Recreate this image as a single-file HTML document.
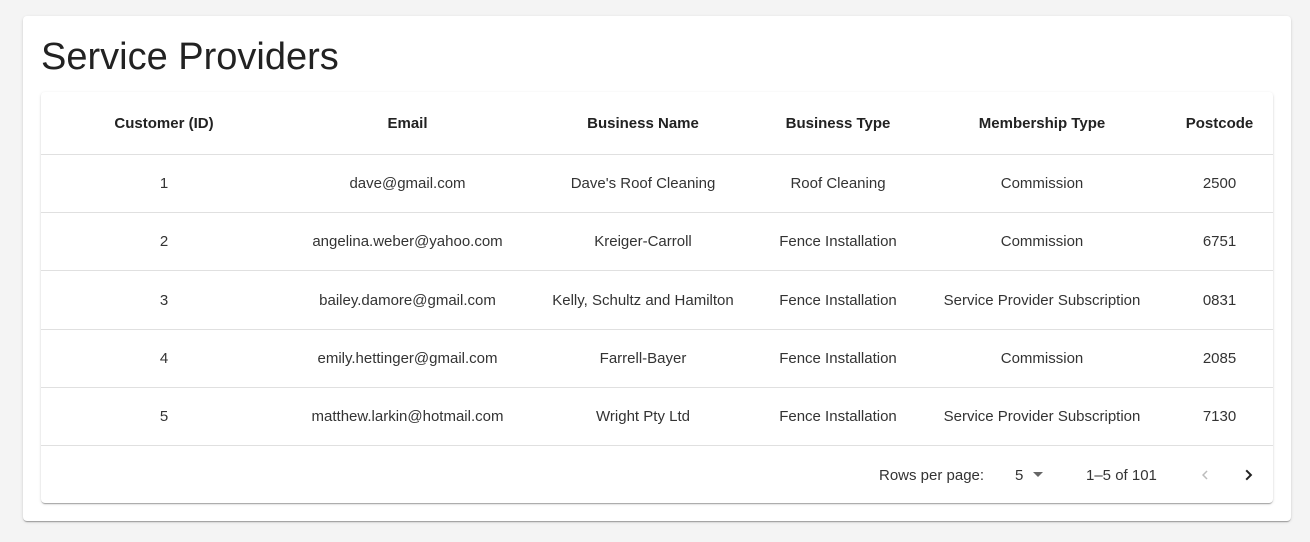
<!DOCTYPE html>
<html><head><style>
body{margin:0;background:#f4f4f4;font-family:"Liberation Sans",Arial,sans-serif;color:rgba(0,0,0,.87);}
.outer{position:absolute;left:23px;top:16px;width:1268px;height:505px;background:#fff;border-radius:4px;box-shadow:0 2px 1px -1px rgba(0,0,0,.2),0 1px 1px rgba(0,0,0,.14),0 1px 3px rgba(0,0,0,.12);}
h1{position:absolute;left:18px;top:21px;margin:0;font-weight:400;font-size:38px;line-height:40px;color:#222;}
.inner{position:absolute;left:18px;top:76px;width:1232px;height:411px;background:#fff;border-radius:4px;box-shadow:0 2px 1px -1px rgba(0,0,0,.2),0 1px 1px rgba(0,0,0,.14),0 1px 3px rgba(0,0,0,.12);}
table{border-collapse:collapse;table-layout:fixed;width:1232px;font-size:15px;}
td,th{text-align:center;border-bottom:1px solid #e0e0e0;padding:0;}
th{height:62px;font-weight:700;color:#222;}
td{height:57px;color:#333;}
tr.t td{height:58px;}
.foot{position:absolute;top:353px;left:0;right:0;height:58px;font-size:15px;color:#333;}
.foot span{position:absolute;top:22px;}
</style></head><body>
<div class="outer">
<h1>Service Providers</h1>
<div class="inner">
<table>
<colgroup><col style="width:246px"><col style="width:241px"><col style="width:230px"><col style="width:160px"><col style="width:248px"><col style="width:107px"></colgroup>
<tr><th>Customer (ID)</th><th>Email</th><th>Business Name</th><th>Business Type</th><th>Membership Type</th><th>Postcode</th></tr>
<tr><td>1</td><td>dave@gmail.com</td><td>Dave's Roof Cleaning</td><td>Roof Cleaning</td><td>Commission</td><td>2500</td></tr>
<tr><td>2</td><td>angelina.weber@yahoo.com</td><td>Kreiger-Carroll</td><td>Fence Installation</td><td>Commission</td><td>6751</td></tr>
<tr class="t"><td>3</td><td>bailey.damore@gmail.com</td><td>Kelly, Schultz and Hamilton</td><td>Fence Installation</td><td>Service Provider Subscription</td><td>0831</td></tr>
<tr><td>4</td><td>emily.hettinger@gmail.com</td><td>Farrell-Bayer</td><td>Fence Installation</td><td>Commission</td><td>2085</td></tr>
<tr><td>5</td><td>matthew.larkin@hotmail.com</td><td>Wright Pty Ltd</td><td>Fence Installation</td><td>Service Provider Subscription</td><td>7130</td></tr>
</table>
<div class="foot">
<span style="left:838px">Rows per page:</span>
<span style="left:974px">5</span>
<svg style="position:absolute;left:990px;top:25px" width="14" height="10"><path d="M2 2h10l-5 5z" fill="#666"/></svg>
<span style="left:1045px">1–5 of 101</span>
<svg style="position:absolute;left:1155px;top:21px" width="18" height="18" viewBox="0 0 24 24"><path d="M15.4 7.4 14 6l-6 6 6 6 1.4-1.4L10.8 12z" fill="#bdbdbd"/></svg>
<svg style="position:absolute;left:1198px;top:20px" width="20" height="20" viewBox="0 0 24 24"><path d="M9.5 5.5 7.8 7.2 12.6 12l-4.8 4.8 1.7 1.7L16 12z" fill="#222"/></svg>
</div>
</div>
</div>
</body></html>
